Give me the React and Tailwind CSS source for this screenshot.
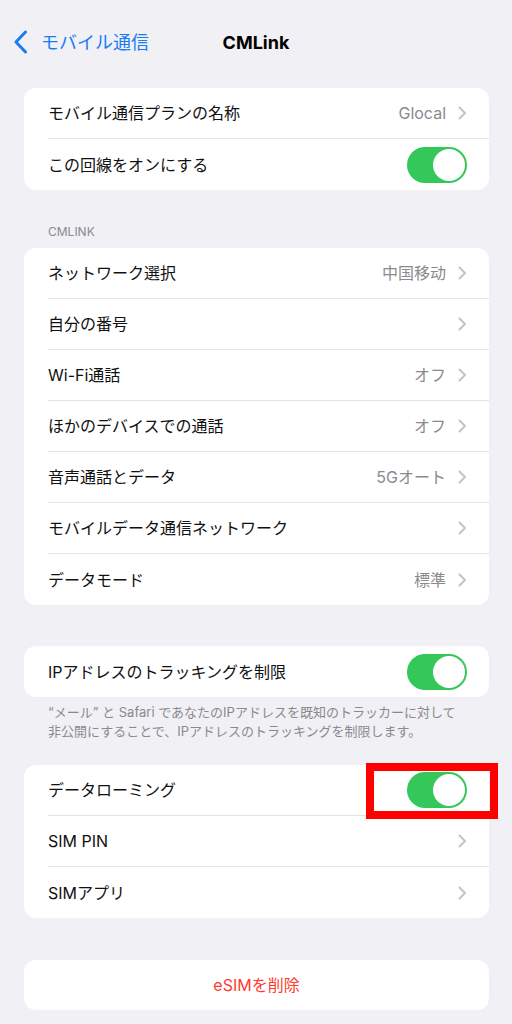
import React from "react";

const font = { fontFamily: 'Inter, "Noto Sans CJK JP", sans-serif' };

function Chevron() {
  return (
    <svg width="9" height="14" viewBox="0 0 9 14" className="shrink-0">
      <polyline points="1.5,1.5 7,7 1.5,12.5" fill="none" stroke="#c4c4c8" strokeWidth="2" strokeLinecap="round" strokeLinejoin="round" />
    </svg>
  );
}

function Toggle() {
  return (
    <div className="w-[60px] h-[36px] rounded-full bg-[#34c759] flex items-center justify-end p-[2px] shrink-0">
      <div className="w-[32px] h-[32px] rounded-full bg-white" />
    </div>
  );
}

function Row({ label, value, chevron, toggle, last, children }) {
  return (
    <div className="relative h-[51px] flex items-center pl-6">
      <div className={"flex-1 h-full flex items-center pr-[22px] " + (last ? "" : "border-b border-[#e3e3e8]")}>
        <span className="flex-1 text-[16px] text-[#111]">{label}</span>
        {value && <span className="text-[16px] text-[#8a8a8e] mr-[12px]">{value}</span>}
        {chevron && <Chevron />}
        {toggle && <Toggle />}
      </div>
      {children}
    </div>
  );
}

function Card({ children, className = "" }) {
  return <div className={"ml-6 mr-[23px] bg-white rounded-[12px] " + className}>{children}</div>;
}

export default function App() {
  return (
    <div className="min-h-[1024px] bg-[#f0f0f5] pb-4" style={font}>
      <div className="relative h-[84px] flex items-center">
        <div className="flex items-center pl-[14px]">
          <svg width="14" height="24" viewBox="0 0 14 24">
            <polyline points="11.5,2 2,12 11.5,22" fill="none" stroke="#1a7cf5" strokeWidth="3" strokeLinecap="round" strokeLinejoin="round" />
          </svg>
          <span className="ml-[13px] text-[18px] text-[#1a7cf5]">モバイル通信</span>
        </div>
        <span className="absolute left-0 right-0 text-center text-[18px] font-bold text-black pointer-events-none">CMLink</span>
      </div>

      <Card className="mt-1">
        <Row label="モバイル通信プランの名称" value="Glocal" chevron />
        <Row label="この回線をオンにする" toggle last />
      </Card>

      <div className="h-[58px] flex items-end pb-2 pl-12">
        <span className="text-[12px] leading-4 text-[#8a8a8e]">CMLINK</span>
      </div>

      <Card>
        <Row label="ネットワーク選択" value="中国移动" chevron />
        <Row label="自分の番号" chevron />
        <Row label="Wi-Fi通話" value="オフ" chevron />
        <Row label="ほかのデバイスでの通話" value="オフ" chevron />
        <Row label="音声通話とデータ" value="5Gオート" chevron />
        <Row label="モバイルデータ通信ネットワーク" chevron />
        <Row label="データモード" value="標準" chevron last />
      </Card>

      <Card className="mt-[41px]">
        <Row label="IPアドレスのトラッキングを制限" toggle last />
      </Card>
      <div className="pl-12 pr-4 pt-[6px] text-[13px] leading-[19px] text-[#8a8a8e] whitespace-nowrap">
        “メール” と Safari であなたのIPアドレスを既知のトラッカーに対して
        <br />
        非公開にすることで、IPアドレスのトラッキングを制限します。
      </div>

      <Card className="mt-[24px]">
        <Row label="データローミング" toggle>
          <div className="absolute left-[342px] top-[-2px] w-[132px] h-[56px] border-[8px] border-[#ff0000]" />
        </Row>
        <Row label="SIM PIN" chevron />
        <Row label="SIMアプリ" chevron last />
      </Card>

      <Card className="mt-[42px] h-[50px] flex items-center justify-center">
        <span className="text-[16px] text-[#ff3b30]">eSIMを削除</span>
      </Card>
    </div>
  );
}
